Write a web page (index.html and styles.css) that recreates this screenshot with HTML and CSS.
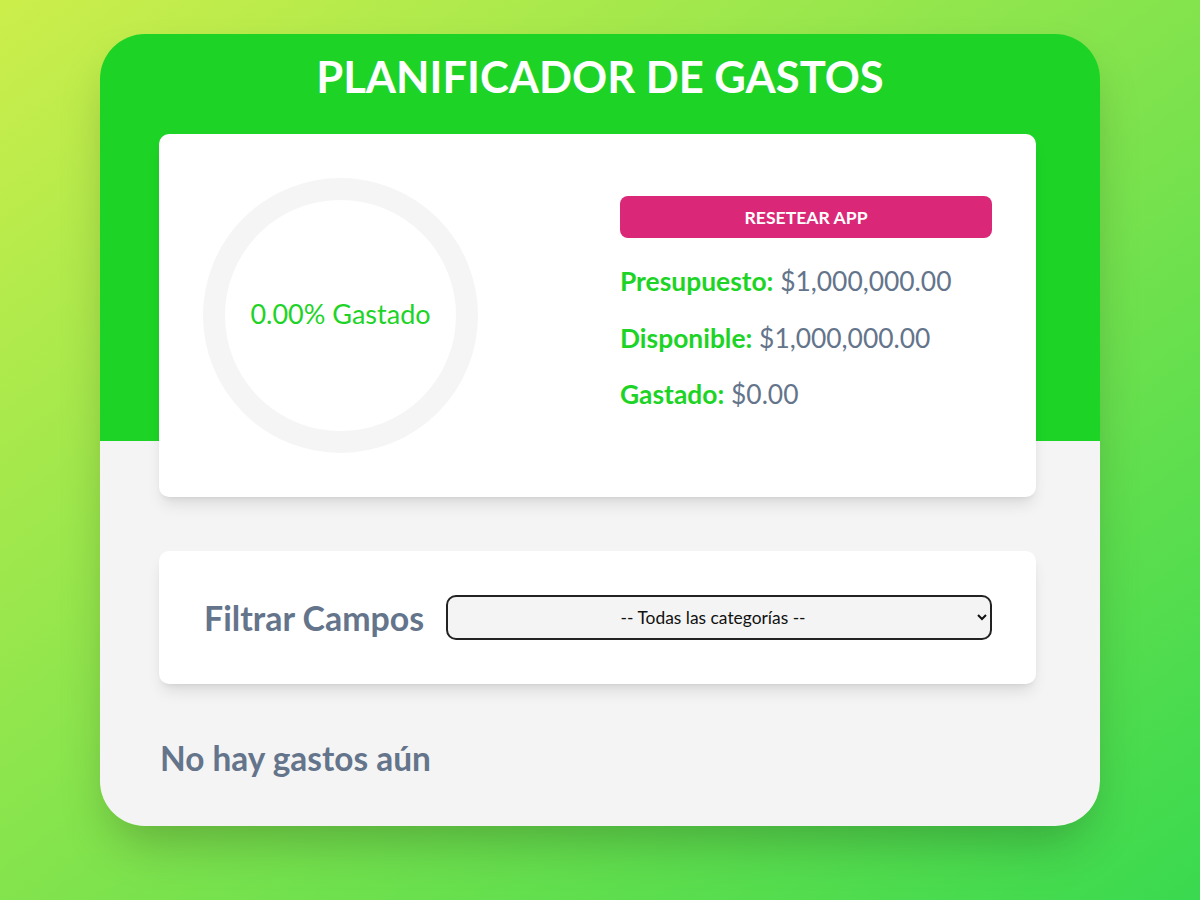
FILE: index.html
```html
<!DOCTYPE html>
<html lang="es">
<head>
<meta charset="utf-8">
<title>Planificador de Gastos</title>
<link rel="stylesheet" href="styles.css">
</head>
<body>
  <main class="app">
    <h1 class="title">Planificador de Gastos</h1>
    <section class="card budget">
      <div class="progress">
        <svg class="ring" viewBox="0 0 100 100" width="275" height="275">
          <circle cx="50" cy="50" r="46" fill="none" stroke="#f5f5f5" stroke-width="8"/>
        </svg>
        <span class="progress-text">0.00% Gastado</span>
      </div>
      <div class="stats">
        <button class="reset" type="button">Resetear App</button>
        <p class="stat"><span class="stat-label">Presupuesto:</span> $1,000,000.00</p>
        <p class="stat"><span class="stat-label">Disponible:</span> $1,000,000.00</p>
        <p class="stat"><span class="stat-label">Gastado:</span> $0.00</p>
      </div>
    </section>
    <section class="card filter">
      <label class="filter-label" for="cat">Filtrar Campos</label>
      <select id="cat" class="filter-select">
        <option>-- Todas las categorías --</option>
      </select>
    </section>
    <h2 class="empty">No hay gastos aún</h2>
  </main>
</body>
</html>
```

FILE: styles.css
```css
* { box-sizing: border-box; }
html, body { height: 100%; }
body {
  margin: 0;
  font-family: Lato, "Open Sans", sans-serif;
  background: linear-gradient(to bottom right, #ccee4b, #3ad94f);
  min-height: 900px;
  overflow: hidden;
}
.app {
  width: 1000px;
  margin: 34px auto 0;
  border-radius: 45px;
  background: linear-gradient(#1dd426 0, #1dd426 407px, #f4f4f4 407px);
  box-shadow: 0 25px 50px -12px rgba(0, 0, 0, 0.25);
  padding: 16px 64px 48px 59px;
}
.title {
  margin: 0 0 32px 5px;
  font-size: 43.5px;
  line-height: 52px;
  font-weight: 700;
  color: #fff;
  text-align: center;
  text-transform: uppercase;
}
.card {
  background: #fff;
  border-radius: 10px;
  box-shadow: 0 10px 15px -3px rgba(0,0,0,0.1), 0 4px 6px -4px rgba(0,0,0,0.1);
  padding: 44px;
}
.budget {
  display: grid;
  grid-template-columns: 1fr 1fr;
  gap: 45px;
}
.progress {
  position: relative;
  width: 275px;
  height: 275px;
}
.ring { display: block; }
.progress-text {
  position: absolute;
  inset: 0;
  display: flex;
  align-items: center;
  justify-content: center;
  padding-bottom: 4px;
  color: #1dd426;
  font-size: 27px;
}
.stats {
  display: flex;
  flex-direction: column;
  gap: 24.5px;
  padding-top: 18px;
}
.reset {
  height: 42px;
  margin-bottom: 2.5px;
  border: 0;
  border-radius: 8px;
  background: #db2777;
  color: #fff;
  font-family: inherit;
  font-weight: 700;
  font-size: 17.6px;
  text-transform: uppercase;
}
.stat {
  margin: 0;
  font-size: 26.4px;
  line-height: 32px;
  color: #64748b;
}
.stat-label {
  color: #1dd426;
  font-weight: 700;
}
.filter {
  margin-top: 54px;
  display: flex;
  align-items: center;
  gap: 22px;
}
.filter-label {
  font-size: 33.9px;
  font-weight: 700;
  color: #64748b;
  padding-left: 1px;
}
.filter-select {
  flex: 1;
  height: 45px;
  border: 2px solid #222;
  border-radius: 10px;
  background: #f4f4f4;
  font-family: inherit;
  font-size: 17.4px;
  color: #111;
  text-align: center;
}
.empty {
  margin: 54px 0 0;
  font-size: 33.4px;
  line-height: 40px;
  font-weight: 700;
  color: #64748b;
  padding-left: 1px;
}
```
